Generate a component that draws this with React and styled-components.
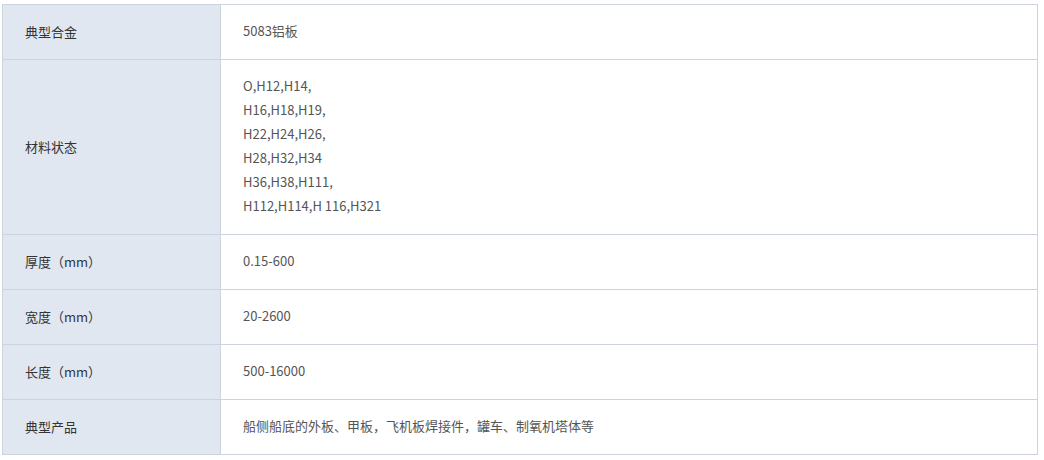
import styled, { createGlobalStyle } from 'styled-components';

const GlobalStyle = createGlobalStyle`
  body {
    margin: 0;
    background: #ffffff;
    font-family: "Noto Sans CJK SC", "Noto Sans", sans-serif;
  }
`;

const Wrapper = styled.div`
  padding: 4px 6px 0 2px;
`;

const SpecTable = styled.table`
  width: 1036px;
  border-collapse: collapse;
  border: 1px solid #ccd3df;
  font-size: 13px;
`;

const Row = styled.tr`
  height: ${(p) => p.$height || 55}px;
`;

const Label = styled.th`
  width: 195px;
  padding: 0 0 2px 22px;
  text-align: left;
  font-weight: normal;
  color: #333333;
  background-color: #e1e7f1;
  border: 1px solid #ccd3df;
`;

const Value = styled.td`
  padding: 11px 22px 13px;
  color: #555555;
  line-height: 24px;
  border: 1px solid #ccd3df;
`;

const specs = [
  { label: '典型合金', value: ['5083铝板'] },
  {
    label: '材料状态',
    height: 175,
    value: [
      'O,H12,H14,',
      'H16,H18,H19,',
      'H22,H24,H26,',
      'H28,H32,H34',
      'H36,H38,H111,',
      'H112,H114,H 116,H321',
    ],
  },
  { label: '厚度（mm）', value: ['0.15-600'] },
  { label: '宽度（mm）', value: ['20-2600'] },
  { label: '长度（mm）', value: ['500-16000'] },
  { label: '典型产品', value: ['船侧船底的外板、甲板，飞机板焊接件，罐车、制氧机塔体等'] },
];

export default function App() {
  return (
    <>
      <GlobalStyle />
      <Wrapper>
        <SpecTable>
          <tbody>
            {specs.map((s) => (
              <Row key={s.label} $height={s.height}>
                <Label>{s.label}</Label>
                <Value>
                  {s.value.map((line, i) => (
                    <div key={i}>{line}</div>
                  ))}
                </Value>
              </Row>
            ))}
          </tbody>
        </SpecTable>
      </Wrapper>
    </>
  );
}
